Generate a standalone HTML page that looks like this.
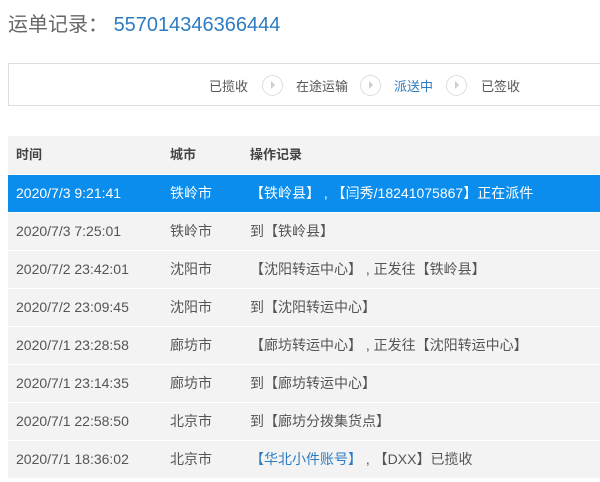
<!DOCTYPE html>
<html><head><meta charset="utf-8"><style>
body{margin:0;width:600px;height:482px;background:#fff;font-family:"Liberation Sans","Noto Sans CJK SC",sans-serif;overflow:hidden;position:relative}
.t{position:absolute;left:8px;top:8px;font-size:20px;color:#666}
.t span{color:#2d7cc1}
.box{position:absolute;left:8px;top:63px;width:600px;height:43px;border:1px solid #ddd;box-sizing:border-box}
.st{position:absolute;top:76px;font-size:13px;color:#555}
.c{position:absolute;top:75px;width:21px;height:21px;border:1px solid #ddd;border-radius:50%;box-sizing:border-box}
.c:after{content:"";position:absolute;left:8px;top:5px;border-left:4px solid #ccc;border-top:4px solid transparent;border-bottom:4px solid transparent}
.tb{position:absolute;left:8px;top:136px;width:592px}
.r{height:37px;line-height:37px;background:#f3f3f3;border-top:1px solid #fff;font-size:14px;color:#555;position:relative}
.r div{position:absolute;top:0;white-space:nowrap}
.a{left:8px}.b{left:162px}.d{left:242px}
.h{height:38px;border:0;font-weight:bold;color:#444;font-size:13px}
.sel{background:#0a8ded;color:#fff}
.bl{color:#2d7cc1}
</style></head><body>
<div class="t">运单记录： <span>557014346366444</span></div>
<div class="box"></div>
<div class="st" style="left:209px">已揽收</div>
<div class="c" style="left:262px"></div>
<div class="st" style="left:296px">在途运输</div>
<div class="c" style="left:360px"></div>
<div class="st" style="left:394px;color:#2d7cc1">派送中</div>
<div class="c" style="left:446px"></div>
<div class="st" style="left:481px">已签收</div>
<div class="tb">
<div class="r h"><div class="a">时间</div><div class="b">城市</div><div class="d">操作记录</div></div>
<div class="r sel"><div class="a">2020/7/3 9:21:41</div><div class="b">铁岭市</div><div class="d">【铁岭县】 , 【闫秀/18241075867】正在派件</div></div>
<div class="r"><div class="a">2020/7/3 7:25:01</div><div class="b">铁岭市</div><div class="d">到【铁岭县】</div></div>
<div class="r"><div class="a">2020/7/2 23:42:01</div><div class="b">沈阳市</div><div class="d">【沈阳转运中心】 , 正发往【铁岭县】</div></div>
<div class="r"><div class="a">2020/7/2 23:09:45</div><div class="b">沈阳市</div><div class="d">到【沈阳转运中心】</div></div>
<div class="r"><div class="a">2020/7/1 23:28:58</div><div class="b">廊坊市</div><div class="d">【廊坊转运中心】 , 正发往【沈阳转运中心】</div></div>
<div class="r"><div class="a">2020/7/1 23:14:35</div><div class="b">廊坊市</div><div class="d">到【廊坊转运中心】</div></div>
<div class="r"><div class="a">2020/7/1 22:58:50</div><div class="b">北京市</div><div class="d">到【廊坊分拨集货点】</div></div>
<div class="r"><div class="a">2020/7/1 18:36:02</div><div class="b">北京市</div><div class="d"><span class="bl">【华北小件账号】</span> , 【DXX】已揽收</div></div>
</div>
</body></html>
